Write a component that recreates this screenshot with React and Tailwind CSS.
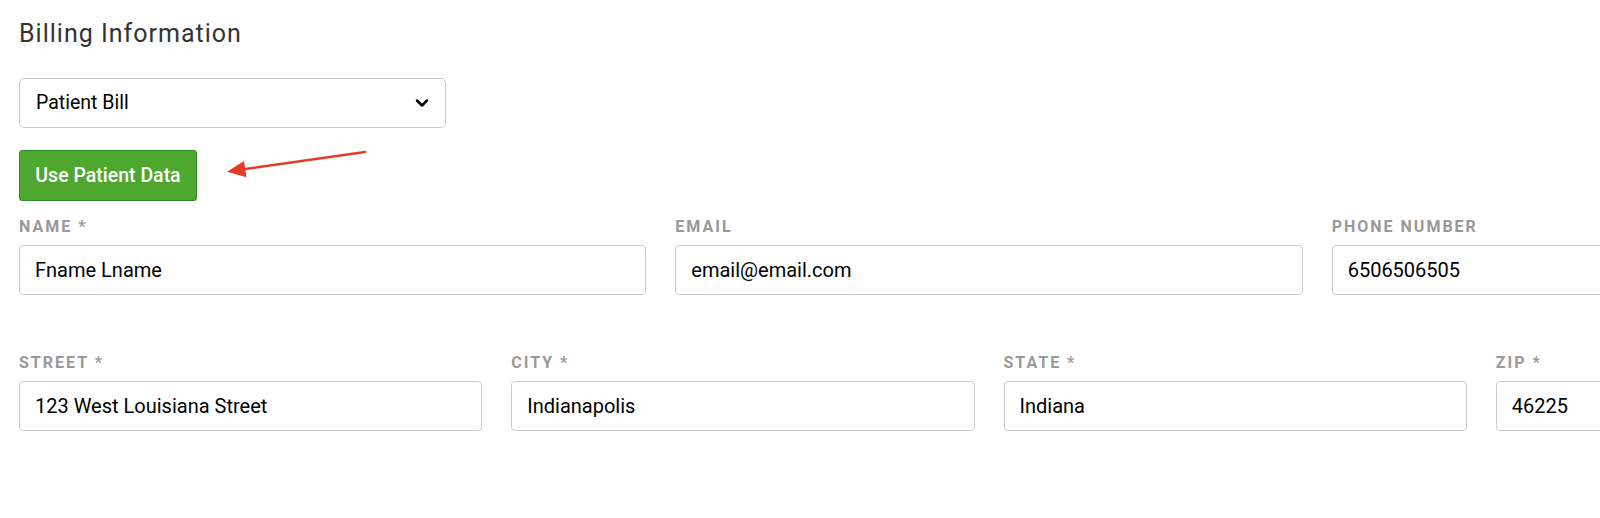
import { ChevronDown } from 'lucide-react';

const topRow = [
  { label: 'Name *', value: 'Fname Lname' },
  { label: 'Email', value: 'email@email.com' },
  { label: 'Phone Number', value: '6506506505' },
];

const addressRow = [
  { label: 'Street *', value: '123 West Louisiana Street' },
  { label: 'City *', value: 'Indianapolis' },
  { label: 'State *', value: 'Indiana' },
  { label: 'Zip *', value: '46225' },
];

function Field({ label, value }) {
  return (
    <div className="flex flex-col">
      <label className="block text-[16px] leading-[18px] font-bold uppercase tracking-[2px] text-[#999999] mb-[9px]">
        {label}
      </label>
      <input
        readOnly
        defaultValue={value}
        className="h-[50px] w-full rounded-[4px] border border-[#cccccc] bg-white pl-[15px] pr-3 text-[20px] text-black outline-none"
      />
    </div>
  );
}

// annotation arrow pointing at the button
function Arrow() {
  return (
    <svg
      className="absolute left-[220px] top-[145px]"
      width="150"
      height="40"
      viewBox="0 0 150 40"
    >
      <line x1="145" y1="7" x2="22" y2="24.5" stroke="#e63b26" strokeWidth="2.5" strokeLinecap="round" />
      <polygon points="7,26.7 26.5,32.3 24,15.9" fill="#e63b26" />
    </svg>
  );
}

export default function App() {
  return (
    <div className="relative w-full h-[518px] overflow-hidden bg-white font-['Roboto',sans-serif]">
      <div className="w-[1940px] ml-[19px] pt-[19px]">
        <h2 className="text-[25px] leading-[30px] tracking-[1px] text-[#333333]">Billing Information</h2>

        <div className="mt-[29px] w-[427px] h-[50px] rounded-[5px] border border-[#cccccc] flex items-center justify-between pl-[16px] pr-[13px]">
          <span className="text-[19.5px] text-black">Patient Bill</span>
          <ChevronDown size={20} strokeWidth={3} className="text-black" />
        </div>

        <button className="mt-[22px] h-[51px] w-[178px] rounded-[3px] border border-[#2d8a1c] bg-[#4ea72f] text-[19.5px] font-medium text-white">
          Use Patient Data
        </button>

        <div className="mt-[17px] grid grid-cols-3 gap-x-[29px]">
          {topRow.map((f) => (
            <Field key={f.label} {...f} />
          ))}
        </div>

        <div className="mt-[59px] grid grid-cols-4 gap-x-[29px]">
          {addressRow.map((f) => (
            <Field key={f.label} {...f} />
          ))}
        </div>
      </div>
      <Arrow />
    </div>
  );
}
